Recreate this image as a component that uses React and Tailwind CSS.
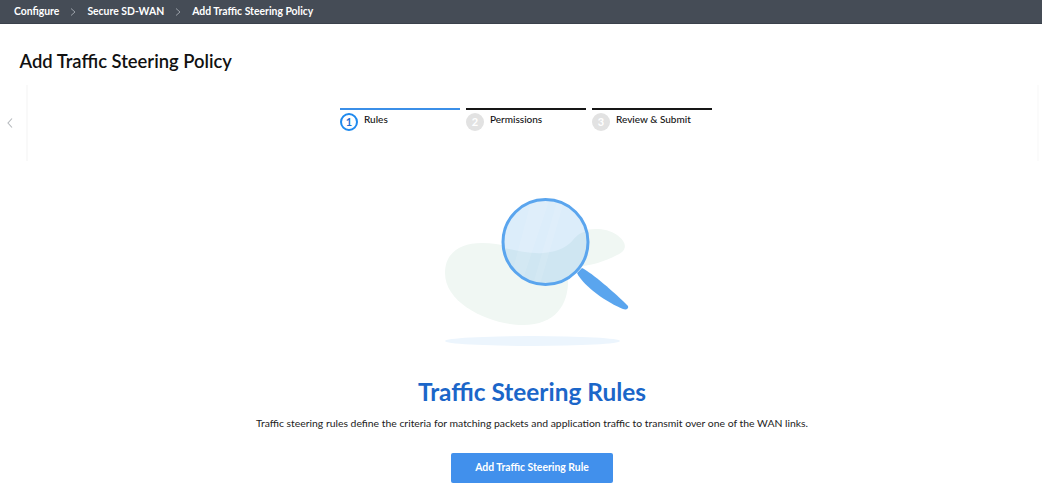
import React from "react";

function Chevron() {
  return (
    <svg className="mx-[10px] text-[#9aa0a8]" width="8" height="10" viewBox="0 0 8 10" fill="none">
      <path d="M2 1.5 L6 5 L2 8.5" stroke="currentColor" strokeWidth="1" />
    </svg>
  );
}

function Step({ n, label, active }) {
  return (
    <div className={`w-[120px] border-t-2 pt-[3px] flex items-start gap-[6px] ${active ? "border-[#3b8fe8]" : "border-[#161616]"}`}>
      <div
        className={`w-[18px] h-[18px] rounded-full flex items-center justify-center text-[11px] font-bold ${
          active ? "border-2 border-[#1f8aee] text-[#1f6fd0]" : "bg-[#e2e2e2] text-white"
        }`}
      >
        {n}
      </div>
      <span className="mt-[1px] text-[10px] leading-[10px] font-medium text-[#111]">{label}</span>
    </div>
  );
}

function Illustration() {
  return (
    <svg width="200" height="160" viewBox="0 0 200 160" className="block">
      <defs>
        <clipPath id="lens">
          <circle cx="113.5" cy="49" r="42.5" />
        </clipPath>
      </defs>
      <path d="M13 80 C13 60 28 50 50 50 C80 50 110 65 136 85 C137 110 125 132 91 132 C60 132 13 112 13 80 Z" fill="#f0f7f3" />
      <path d="M150 38 C160 35 175 35 185 42 C196 50 195 58 185 62 C172 69 160 72 145 74 Z" fill="#f0f7f3" />
      <ellipse cx="100.5" cy="148" rx="87.5" ry="5" fill="#ecf5fd" />
      <path d="M150 75 C160 80 182 99 196 113 C197 116 194 117 191 116 C176 110 152 94 145 80 Z" fill="#5aa5ee" />
      <g clipPath="url(#lens)">
        <rect x="70" y="5" width="90" height="90" fill="#dcedfa" />
        <path d="M68 54 C85 58 100 61 111 60 C128 59 137 52 141 47 C145 42 149 39 156 38 L160 95 L68 95 Z" fill="#cfe6f2" />
        <path d="M100 5 L118 5 L88 95 L76 95 Z" fill="#ffffff" opacity="0.1" />
        <path d="M126 5 L133 5 L107 95 L100 95 Z" fill="#ffffff" opacity="0.1" />
      </g>
      <circle cx="113.5" cy="49" r="42.5" fill="none" stroke="#5aa5ee" strokeWidth="3" />
    </svg>
  );
}

export default function App() {
  return (
    <div className="w-[1042px] h-[504px] overflow-hidden bg-white text-black font-['Lato','Noto_Sans',sans-serif]">
      <div className="h-[24px] bg-[#454c56] border-b border-[#3a414b] flex items-center pl-[14px] text-[10.4px] font-bold text-white">
        <span>Configure</span>
        <Chevron />
        <span>Secure SD-WAN</span>
        <Chevron />
        <span>Add Traffic Steering Policy</span>
      </div>

      <h1 className="ml-[19.5px] mt-[25px] text-[18.4px] leading-[24px] font-semibold text-[#111]">Add Traffic Steering Policy</h1>

      <div className="mt-[12px] h-[76px] flex items-center">
        <div className="w-[26px] flex justify-center pr-[6px]">
          <svg width="8" height="12" viewBox="0 0 8 12" fill="none" className="text-[#b5b9bd]">
            <path d="M6 1.5 L2 6 L6 10.5" stroke="currentColor" strokeWidth="1.1" />
          </svg>
        </div>
        <div className="h-full w-[2px] bg-[#f9f9f9]" />
        <div className="flex h-full gap-[6px] pt-[23px] ml-[312px]">
          <Step n="1" label="Rules" active />
          <Step n="2" label="Permissions" />
          <Step n="3" label="Review & Submit" />
        </div>
        <div className="h-full w-[2px] bg-[#fbfbfb] ml-auto mr-[3px]" />
      </div>

      <div className="ml-[22px] flex flex-col items-center">
        <div className="mt-[32px]">
          <Illustration />
        </div>
        <h2 className="mt-[24px] text-[24.4px] leading-[30px] font-bold text-[#1b66c9]">Traffic Steering Rules</h2>
        <p className="mt-[8px] text-[10.4px] leading-[16px] text-[#222]">
          Traffic steering rules define the criteria for matching packets and application traffic to transmit over one of the WAN links.
        </p>
        <button className="mt-[22px] w-[162px] h-[30px] rounded-[2px] bg-[#4190ec] text-white text-[10.4px] font-bold">
          Add Traffic Steering Rule
        </button>
      </div>
    </div>
  );
}
